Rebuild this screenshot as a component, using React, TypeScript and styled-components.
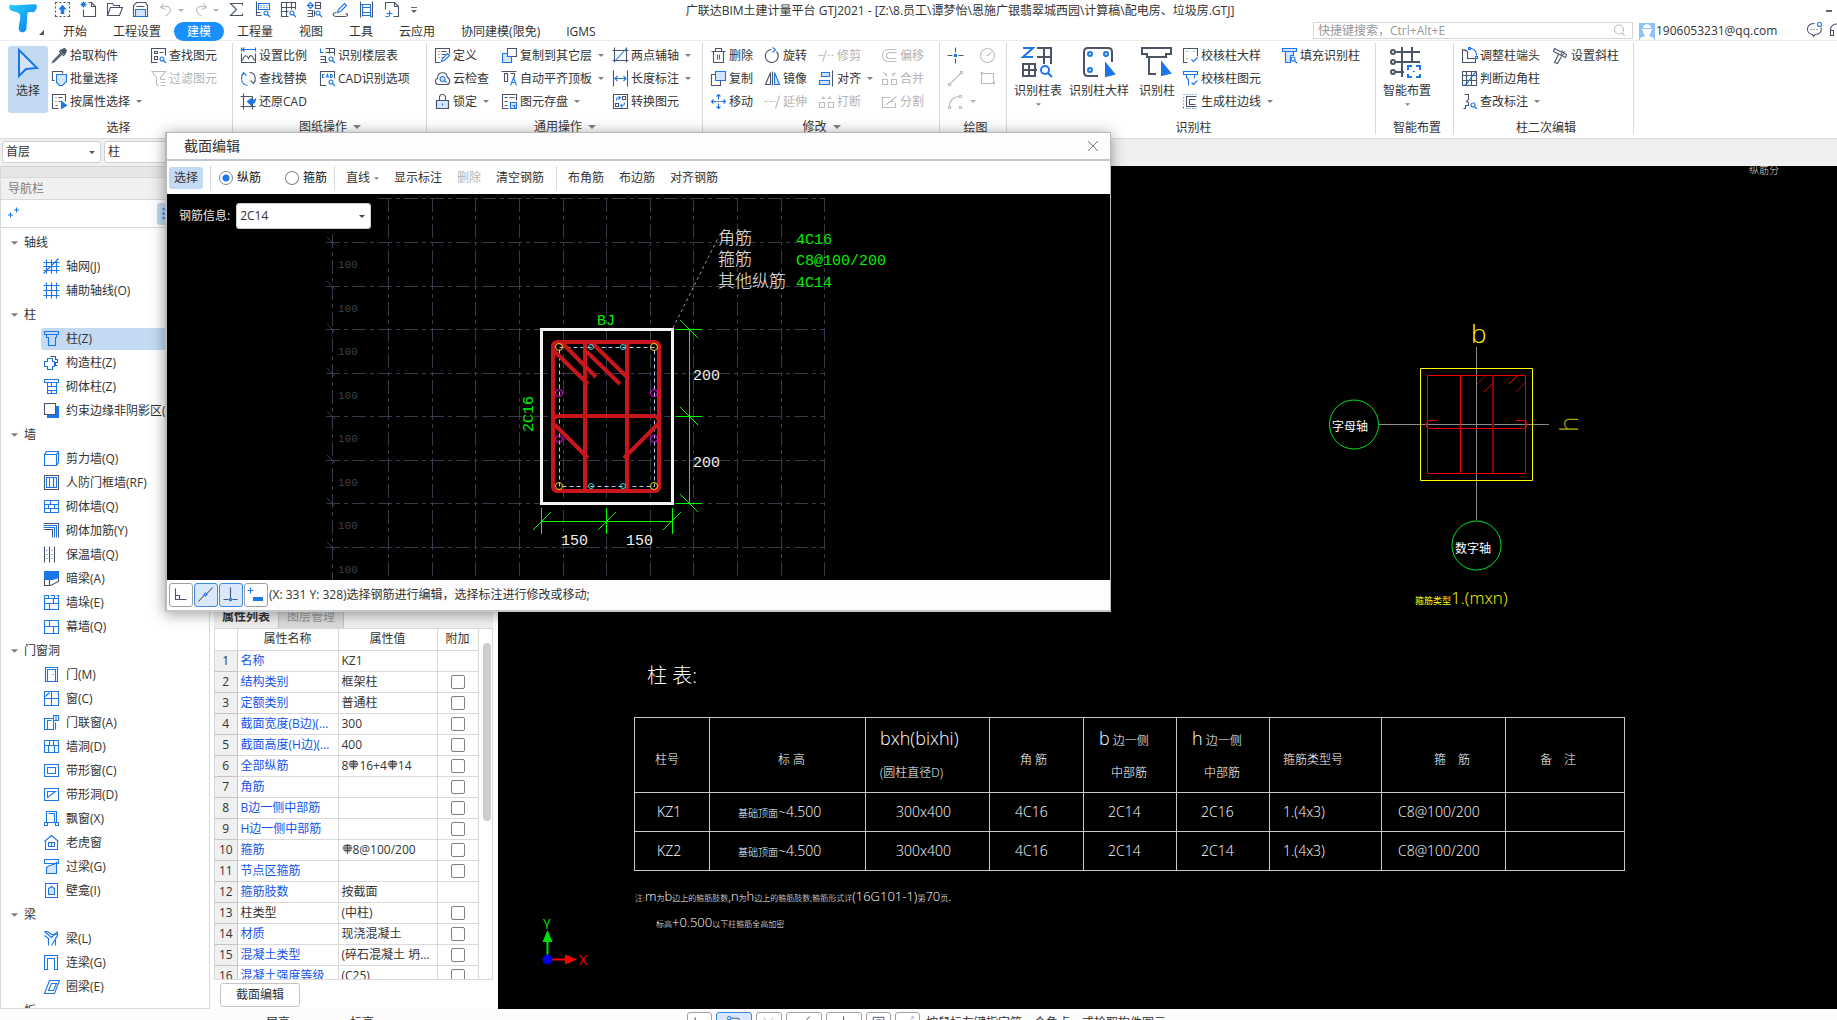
import React from 'react';
import styled, { createGlobalStyle, css } from 'styled-components';

const UI_FONT = '"Open Sans", "Noto Sans CJK SC", sans-serif';
const CAD_FONT = '"Open Sans", "Noto Sans CJK SC", sans-serif';
const MONO_FONT = '"Liberation Mono", "Noto Sans CJK SC", monospace';

const color = {
  text: '#333333',
  muted: '#b4b4b4',
  line: '#d9d9d9',
  dark: '#4b5567',
  blue: '#1b76e8',
  pale: '#d3e4fb',
  active: '#c3daf2',
  panel: '#f0f0f0',
};

const GlobalStyle = createGlobalStyle`
  *, *::before, *::after { box-sizing: border-box; }
  html, body { margin: 0; overflow: hidden; }
  body { font: 12px/18px ${UI_FONT}; color: ${color.text}; background: #fff; }
  button, input, select { font: inherit; color: inherit; }
`;

/* ------------------------------------------------------------------ icons */

type Tone = 'd' | 'b' | 'g' | 'r' | 'D' | 'B' | 'L' | 'G' | 'W';
type Mark = [Tone, string];

const toneStyle: Record<Tone, { stroke: string; fill: string }> = {
  d: { stroke: color.dark, fill: 'none' },
  b: { stroke: color.blue, fill: 'none' },
  g: { stroke: '#bdbdbd', fill: 'none' },
  r: { stroke: '#d8232a', fill: 'none' },
  D: { stroke: color.dark, fill: color.dark },
  B: { stroke: color.blue, fill: color.blue },
  L: { stroke: color.blue, fill: color.pale },
  G: { stroke: '#9a9a9a', fill: '#9a9a9a' },
  W: { stroke: color.dark, fill: '#ffffff' },
};

const LENS = 'M13.5 11.5a2 2 0 1 1-4 0a2 2 0 1 1 4 0M13 13l2.5 2.5';

const icons: Record<string, Mark[]> = {
  upload: [['d', 'M1 3V1h2M5 1h2M9 1h2M13 1h2v2M15 5v2M15 9v2M15 13v2h-2M11 15H9M7 15H5M3 15H1v-2M1 11V9M1 7V5'], ['B', 'M8 4l3 3.500H9.200V12H6.800V7.500H5z']],
  newFile: [['d', 'M8 1h3l4 4v10H3V8M11 1v4h4'], ['b', 'M1 1l4 4M5 1L1 5M3 0v6M0 3h6']],
  open: [['d', 'M1 14V2h5l1.500 2H13v2M1 14l3-8h12l-3 8z']],
  save: [['d', 'M1 15V4l3-3h9l2 3v11zM4 5h8'], ['L', 'M3 15V8h10v7z']],
  undo: [['g', 'M5 2L2 6l5 2M2 6c8-3 12 1 9 5c-1 1.500-3 3-4 3.500']],
  redo: [['g', 'M10 2l3 4l-5 2M13 6C5 3 1 7 4 11c1 1.500 3 3 4 3.500']],
  sum: [['d', 'M14 4V2H2l6 6l-6 6h12v-2']],
  calcView: [['d', 'M2 0v14M2 14h5M2 11h4'], ['b', 'M4 2h11v6H4zM6 4h1M9 4h1M12 4h1M6 6h1M9 6h1M12 6h1'], ['b', LENS]],
  gridFind: [['d', 'M8 15H1V1h14v7M1 6h14M1 10h7M6 1v14M11 1v7'], ['b', LENS]],
  partFind: [['d', 'M9 1h5v6H9zM1 9h5v6H1M8 9v6M1 12h5M9 4h5'], ['b', 'M4 1L1 4l3 3l3-3zM2 4h4'], ['b', LENS]],
  sketch: [['d', 'M4 11c-5 0-4 4 0 4h8c4 0 4-3 1-3'], ['b', 'M5 11l1-3l6-6l2 2l-6 6z']],
  frame: [['d', 'M2 0v16M14 0v16'], ['b', 'M4 3h8M4 6h8M4 11h8M4 14h8M2 3h2v12M12 3v12h2']],
  expand: [['d', 'M1 8V1h9l4 4v10H9M10 1v4h4'], ['b', 'M5 9v6M2 12h6M1 15h3']],
  picker: [['D', 'M9 3l4 4l2-4l-2-2z'], ['d', 'M10 5l-8 8l-1 2l2-1l8-8M7.500 3.500l5 5']],
  batch: [['d', 'M3 10H1V1h10v2'], ['L', 'M5 4h10v7l-4 4H8l-3-3z']],
  byProp: [['d', 'M7 15H1V1h13v7M4 4h1M7 4h4M4 8h1M7 8h2M4 12h2'], ['B', 'M10 8l5 4l-5 3z']],
  find: [['d', 'M7 15H1V1h14v7M4 4h3v2H4zM9 5h4M4 9h3v3H4z'], ['b', LENS]],
  filter: [['g', 'M1 1h14l-5 6v2M6 7v7l2 1.500M1 1l5 6M10 9h5M10 12h5M10 15h5']],
  scale: [['b', 'M1 2h14M1 0v4M15 0v4M4 0L2 2l2 2'], ['d', 'M1 6v9h14V6M2 13c2-6 4-6 6-2c2-5 4-3 6 2']],
  replace: [['d', 'M9 2c6 0 7 7 4 11M10 10l3 3l2-3'], ['b', 'M7 15C0 14 0 6 3 3M1 5l2-3l3 3']],
  restore: [['d', 'M0 3h12M3 0v16M0 13h15M12 3v13'], ['B', 'M7 8l4-3v2c3 0 4-1 4-2c0 4-2 5-4 5v2z']],
  floorTable: [['b', 'M1 1v4h3'], ['d', 'M6 1h9v7M6 5h9M10 1v5M1 9h5v6M1 15h7M1 12h5'], ['b', LENS]],
  cadOpt: [['d', 'M7 15H1V1h14v7'], ['b', 'M5 4H3v3h2M7 7l1-3l1 3M11 4v3h1l1-1.500L12 4z'], ['b', LENS]],
  define: [['d', 'M6 15H1V1h14v5M4 4h1M7 4h5M4 7h1M7 7h4M4 10h1M7 10h1'], ['b', 'M7 14l1-3l5-5l2 2l-5 5z']],
  cloud: [['d', 'M4 14C0 14 0 8 3 8C3 1 12 0 13 7c3 1 3 7-1 7z'], ['L', 'M10.500 8.500a2.500 2.500 0 1 1-5 0a2.500 2.500 0 1 1 5 0M10 10l2 2']],
  lock: [['L', 'M2 7h12v8H2z'], ['d', 'M2 7h12v8H2zM5 7V3c1-3 5-3 6 0v4'], ['B', 'M8 10v2']],
  copyFloor: [['d', 'M6 1h9v8H6z'], ['L', 'M1 6h5v3h4v6H1z']],
  alignTop: [['d', 'M0 1h15M3 3h3v8H3zM9 3h4v4'], ['b', 'M9 15l3-8l3 8M10 12h4']],
  store: [['d', 'M7 15H1V1h14v6M3 4h3M8 4h5M3 8h3M3 12h3'], ['L', 'M9 9h6v6H9zM11 12h2v3']],
  axis: [['d', 'M2 0v15M14 0v15M0 3h16M0 13h16'], ['b', 'M2 14L14 1']],
  dim: [['d', 'M1 0v16M15 0v16'], ['b', 'M2 8h12M5 5.500L2.500 8L5 10.500M11 5.500L13.500 8L11 10.500']],
  convert: [['d', 'M1 1h14v14H1zM10 3h3v3h-3zM3 10h3v3H3z'], ['b', 'M4 7c0-3 1-3 4-3M12 9c0 3-1 3-4 3M6 3l2 1l-2 2M10 14l-2-2l2-1']],
  trash: [['d', 'M1 4h14M3 4v11h10V4M5 4V1h6v3'], ['r', 'M7 7v5M9 7v5']],
  copy: [['L', 'M5 1h10v9H5z'], ['d', 'M5 4H1v11h9v-5']],
  move: [['b', 'M8 1v5M8 10v5M1 8h5M10 8h5M6 3l2-2l2 2M6 13l2 2l2-2M3 6L1 8l2 2M13 6l2 2l-2 2'], ['d', 'M7 8h2']],
  rotate: [['d', 'M7 2a6.500 6.500 0 1 0 5 2'], ['b', 'M8 0l3 2l-3 3']],
  mirror: [['d', 'M6 2v12H1z'], ['L', 'M10 2v12h5z'], ['d', 'M8 1v14']],
  extend: [['g', 'M0 8h3M5 8h3M9 8h2M15 2l-4 13']],
  trim: [['g', 'M0 8h5M8 3L4 14M9 8h2M13 8h2']],
  alignObj: [['L', 'M3 2h8v4H3zM1 10h10v4H1z'], ['d', 'M14 0v16']],
  breakObj: [['g', 'M1 9h5v5H1zM10 9h5v5h-5zM3 5h3L4 3M13 5h-3l2-2']],
  offset: [['g', 'M15 2H7c-8 0-8 12 0 12h8M15 5H8c-4 0-4 6 0 6h7']],
  merge: [['g', 'M1 9h5v5H1zM10 9h5v5h-5zM2 2l3 3V3M14 2l-3 3V3']],
  split: [['g', 'M9 4H1v10h13V9M5 11l10-8M9 8h3']],
  point: [['d', 'M8 0v5M8 11v5M0 8h5M11 8h5'], ['B', 'M7 7h2v2H7z']],
  circle: [['g', 'M15 8a7 7 0 1 1-14 0a7 7 0 1 1 14 0M7 8h2l3-4']],
  line: [['g', 'M3 13L13 3M1 13h2v2H1zM13 1h2v2h-2z']],
  rect: [['g', 'M2 3h12v10H2zM1 2h2v2M13 12h2v2']],
  arc: [['g', 'M2 13C2 7 6 3 12 3M1 13h2v2H1zM12 2h2v2h-2zM12 13h2v2h-2z']],
  checkBig: [['d', 'M5 15H1V1h14v8M4 11h1'], ['b', 'M9 12l2 2l4-4M4 4h1M11 4h1']],
  checkEl: [['b', 'M1 1h14v3H1zM4 4v3l2 2v6M12 4v4M9 12l2 2l4-4']],
  edge: [['d', 'M14 3H4v10h10M13 6H7v5h6'], ['b', 'M1 1h1M4 1h1M7 1h1M10 1h1M13 1h1M1 4v1M1 7v1M1 10v1M1 13v2M4 15h1M7 15h1M10 15h1M13 15h1']],
  fillCol: [['L', 'M1 1h14v3H1zM4 4h8v4H9v7H4z'], ['b', LENS]],
  endAdj: [['d', 'M1 2v13h13v-4H6V4zM3 2l3 2'], ['b', 'M8 1h2c4 1 5 4 5 7M7 0h2v2H7zM14 9h2v2h-2z']],
  cornerCol: [['d', 'M1 1h14v14H1zM1 5h14M1 10h14M5 1v14M10 1v14'], ['b', 'M1 15c6 0 6-7 14-14']],
  checkDim: [['d', 'M3 1h4v5L5 8l2 1v3H4v3H2'], ['b', LENS]],
  slant: [['d', 'M2 1l12 6l-1 3L1 4zM6 7l-4 8l3 1l4-7M10 3L8 8M12 4l-2 4']],
  bigGrid: [['b', 'M1 1h5L1 5.500h5'], ['d', 'M8 1h7v8M8 5.500h7M11.500 1v8M1 9h6v6H1zM4 9v6M1 12h7'], ['b', 'M14 12a2 2 0 1 1-4 0a2 2 0 1 1 4 0M13.500 13.500l2 2']],
  bigSample: [['d', 'M8 15H3q-2 0-2-2V3q0-2 2-2h10q2 0 2 2v5'], ['b', 'M5 4a1 1 0 1 1-2 0a1 1 0 1 1 2 0M13 4a1 1 0 1 1-2 0a1 1 0 1 1 2 0M5 12a1 1 0 1 1-2 0a1 1 0 1 1 2 0'], ['B', 'M12 9l4 5l-4 1z']],
  bigCol: [['d', 'M1 1h14.500v3H13v1.500H3.500V4H1zM4.500 5.500V14H8'], ['B', 'M11 8.500l4 5l-4 1z']],
  bigSmart: [['d', 'M3 3h12M3 8h12M3 13h4M6 .5v15M11 .5V8M2.500 3a1 1 0 1 1-2 0a1 1 0 1 1 2 0M2.500 8a1 1 0 1 1-2 0a1 1 0 1 1 2 0M2.500 13a1 1 0 1 1-2 0a1 1 0 1 1 2 0'], ['b', 'M9 12v-2h2M13 10h2v2M15 14v1.500h-2M11 15.500H9V14M12 12.500v.5']],
  bigArrow: [['L', 'M4 2l9 9l-5.500 .5L4 15z']],
  axisNet: [['b', 'M3 1v14M8 1v14M13 1v14M0 4h16M0 8h16M0 12h16M0 15L15 0']],
  axisAux: [['b', 'M3 0v16M8 0v16M13 0v16M0 3h16M0 8h16M0 13h16']],
  column: [['b', 'M1 1h14v3H1zM3 4v3h2v8h7V7h1V4']],
  tieCol: [['d', 'M7 2h5v3h2v3h-2v3h2'], ['b', 'M4 4h5v3h2v5H9v3H4v-3H1V7h3z']],
  brickCol: [['b', 'M1 1h14v3H1zM4 4v11h9V4M4 8h9M4 12h9M8 4v4M8 12v3']],
  edgeZone: [['B', 'M13 4h2v11H4v-2h9z'], ['W', 'M1 1h11v11H1z']],
  shearWall: [['b', 'M1 4h12v11H1zM1 4l2-3h12v11l-2 3M13 4l2-3']],
  defence: [['d', 'M1 1h14v14H1z'], ['b', 'M3 3h10v10H3zM6 3v10M10 3v10']],
  brickWall: [['b', 'M1 2h14v12H1zM1 6h14M1 10h14M7 2v4M11 6v4M5 6v4M7 10v4']],
  brickBar: [['d', 'M0 1h15v14M0 7h9v8'], ['b', 'M0 5h11v10M0 3h13v12']],
  insulate: [['d', 'M1 0v16M6 0v16M11 0v16'], ['b', 'M3 4h1M3 8h1M3 12h1M8 4h1M8 8h1M8 12h1']],
  hiddenBeam: [['B', 'M1 1h14v6l-6 2H1z'], ['d', 'M1 9v6h6l8-4V7M6 9v6']],
  pier: [['b', 'M1 4h14v11H1zM1 1h4v3M7 1h4v3M13 1h2v3M1 1v3M1 9h14M6 9v6M10 4v5']],
  curtain: [['b', 'M1 2h14v13H1zM1 8h14M6 2v6M10 8v7']],
  door: [['b', 'M2 1h12v14H2zM4 15V3h8v12M9 8h1']],
  window: [['b', 'M1 1h14v14H1zM1 8h14M8 1v14M2 6l4-4']],
  doorWin: [['b', 'M1 4h9v11H1zM4 15V6h4M10 1h5v5h-5zM12.500 1v5M12 8v7']],
  wallHole: [['b', 'M1 2h14v12H1zM5 14V7h6v7M1 7h14M6 2v5M10 2v5']],
  stripWin: [['b', 'M1 2h14v12H1zM4 5h8v6H4z']],
  stripHole: [['b', 'M1 2h14v12H1zM4 11V5h8z']],
  bayWin: [['b', 'M3 1h10v11H3zM5 3h6v9M1 15v-3h3v3zM12 15v-3h3v3z']],
  dormer: [['b', 'M1 7l7-6l7 6M2 7v8h12V7M5 8h6v4H5zM8 8v4']],
  lintel: [['L', 'M3 15V9c4-4 6-1 10-5v11z'], ['b', 'M1 1h14v4H1z']],
  niche: [['b', 'M2 1h12v14H2z'], ['L', 'M5 12V6l3-2l3 2v6z']],
  beam: [['b', 'M1 1l7 6l6-6M1 1h3l4 3h6M1 5l4 3v7M14 2v3L8 15M12 7v8']],
  linkBeam: [['b', 'M1 15V1h13v14h-3V4H4v11z']],
  ringBeam: [['b', 'M1 15l5-13h10l-5 13zM5 12l3-7h5l-3 7z']],
  ortho: [['d', 'M3 2v11h11M3 9h4v4']],
  slash: [['b', 'M8 6.500l1.500 1.500l-1.500 1.500L6.500 8z'], ['d', 'M1 15l5.500-6M9.500 7L15 1']],
  perp: [['d', 'M8 1v12M1 13h5M10 13h5'], ['b', 'M8 11.500l1.500 1.500l-1.500 1.500L6.500 13z']],
  plusBar: [['b', 'M3 1v6M0 4h6'], ['B', 'M6 11h9v3H6z']],
  sparkle: [['b', 'M11 2v5M8.500 4.500h5M5 7v5M2.500 9.500h5']],
  dots: [['b', 'M7 1h2v2H7zM7 7h2v2H7zM7 13h2v2H7z']],
  search: [['g', 'M12 7a4.500 4.500 0 1 1-9 0a4.500 4.500 0 1 1 9 0M10.500 10.500L13 13']],
  chat: [['d', 'M8 2c-9 0-9 10-2 11l1 2l1.500-2c5 0 7-3 6-7M4 8h1M7 8h1M10 8h1'], ['b', 'M15 3a2 2 0 1 1-4 0a2 2 0 1 1 4 0']],
  headset: [['d', 'M2 10C1 0 15 0 14 10M2 9h3v5H2zM11 9h3v5h-3z']],
  cross: [['g', 'M2 2l12 12M14 2L2 14']],
  lasso: [['b', 'M3 1a2 2 0 1 1 0 4a2 2 0 1 1 0-4'], ['d', 'M5 3h7q3 0 3 3']],
  layers: [['d', 'M2 2h12v12H2zM5 5h6v6H5z']],
};

const Svg = styled.svg<{ $size: number }>`
  flex: none;
  display: block;
  overflow: visible;
  width: ${(p) => p.$size}px;
  height: ${(p) => p.$size}px;
`;

function Icon({ name, size = 16, weight = 1.1 }: { name: string; size?: number; weight?: number }) {
  return (
    <Svg $size={size} viewBox="0.5 0.5 16 16" aria-hidden="true">
      {icons[name].map(([tone, d], i) => (
        <path key={i} d={d} strokeWidth={weight} {...toneStyle[tone]} />
      ))}
    </Svg>
  );
}

const CaretSvg = styled.svg<{ $w: number }>`
  flex: none;
  width: ${(p) => p.$w}px;
  height: ${(p) => Math.ceil(p.$w / 2)}px;
`;
function Caret({ w = 6, fill = '#808080' }: { w?: number; fill?: string }) {
  return (
    <CaretSvg $w={w} viewBox="0 0 8 4" aria-hidden="true">
      <path d="M0 0h8L4 4z" fill={fill} />
    </CaretSvg>
  );
}

/* ----------------------------------------------------------------- header */

const Shell = styled.div`
  display: flex;
  flex-direction: column;
  height: 100vh;
  overflow: hidden;
  position: relative;
  white-space: nowrap;
`;

const Header = styled.header`
  flex: none;
  display: grid;
  grid-template-columns: 50px minmax(0, 1fr);
  grid-template-rows: 22px 18px;
  border-bottom: 1px solid #ececec;
`;
const LogoCell = styled.div`
  grid-row: span 2;
  padding: 0 0 5px 8px;
  display: flex;
  align-items: flex-end;
`;
const TitleRow = styled.div`
  display: flex;
  align-items: center;
`;
const Quick = styled.div`
  display: flex;
  align-items: center;
  gap: 10px;
  padding: 0 6px 2px 5px;
`;
const bare = css`
  border: 0;
  background: none;
  padding: 0;
  margin: 0;
  display: flex;
  align-items: center;
`;
const QuickButton = styled.button`
  ${bare}
  gap: 3px;
`;
const WindowTitle = styled.h1`
  flex: 1;
  margin: 0;
  font-size: 12px;
  font-weight: 400;
  text-align: center;
`;
const WindowButtons = styled.div`
  width: 340px;
  display: flex;
  justify-content: flex-end;
  padding-right: 5px;
`;
const Minimise = styled.button`
  ${bare}
  width: 6px;
  height: 2px;
  background: #666;
`;
const TabRow = styled.div`
  display: flex;
  align-items: flex-start;
`;
const Tabs = styled.nav`
  display: flex;
  flex: 1;
`;
const Tab = styled.button<{ $on?: boolean }>`
  ${bare}
  height: 19px;
  padding: 0 13px;
  border-radius: 10px;
  ${(p) => p.$on && 'background: #1890ff; color: #fff;'}
`;
const SearchBox = styled.label`
  display: flex;
  align-items: center;
  width: 320px;
  height: 17px;
  padding: 0 4px;
  border: 1px solid #d5d5d5;
`;
const SearchInput = styled.input`
  flex: 1;
  min-width: 0;
  height: 15px;
  padding: 0;
  border: 0;
  outline: 0;
  &::placeholder { color: #999; opacity: 1; }
`;
const Account = styled.button`
  ${bare}
  width: 168px;
  margin-left: 6px;
  gap: 1px;
`;
const HelpButtons = styled.div`
  width: 30px;
  display: flex;
  gap: 6px;
  overflow: hidden;
`;

const tabs = ['开始', '工程设置', '建模', '工程量', '视图', '工具', '云应用', '协同建模(限免)', 'IGMS'];

function AppHeader() {
  return (
    <Header>
      <LogoCell>
        <svg width="31" height="32" viewBox="0 0 32 32" aria-hidden="true">
          <defs>
            <linearGradient id="logo" x1="0" y1="0" x2="1" y2="1">
              <stop offset="0" stopColor="#28d0f8" />
              <stop offset="1" stopColor="#0878ee" />
            </linearGradient>
          </defs>
          <path d="M2 1C7 3 23 0 29 1c2 1 0 7-3 8c-3 0-6-1-6 2l-1 15c-1 5-7 5-8 0c0-5 3-12 1-15C10 7 3 10 1 4z" fill="url(#logo)" />
        </svg>
        <svg width="5" height="5" viewBox="0 0 5 5" aria-hidden="true">
          <path d="M5 0v5H0z" fill="#555" />
        </svg>
      </LogoCell>
      <TitleRow>
        <Quick>
          {['upload', 'newFile', 'open', 'save'].map((n) => (
            <QuickButton key={n} aria-label={n}><Icon name={n} /></QuickButton>
          ))}
          {['undo', 'redo'].map((n) => (
            <QuickButton key={n} aria-label={n}><Icon name={n} /><Caret fill="#b0b0b0" /></QuickButton>
          ))}
          {['sum', 'calcView', 'gridFind', 'partFind', 'sketch', 'frame', 'expand'].map((n) => (
            <QuickButton key={n} aria-label={n}><Icon name={n} /></QuickButton>
          ))}
          <QuickButton aria-label="more">
            <svg width="6" height="7" viewBox="0 0 6 7"><path d="M0 0h6v1H0zM0 3h6L3 6z" fill="#666" /></svg>
          </QuickButton>
        </Quick>
        <WindowTitle>广联达BIM土建计量平台 GTJ2021 - [Z:\8.员工\谭梦怡\恩施广银翡翠城西园\计算稿\配电房、垃圾房.GTJ]</WindowTitle>
        <WindowButtons><Minimise aria-label="minimise" /></WindowButtons>
      </TitleRow>
      <TabRow>
        <Tabs>
          {tabs.map((t) => <Tab key={t} $on={t === '建模'}>{t}</Tab>)}
        </Tabs>
        <SearchBox>
          <SearchInput aria-label="快捷键搜索" placeholder="快捷键搜索，Ctrl+Alt+E" />
          <Icon name="search" />
        </SearchBox>
        <Account>
          <svg width="16" height="17" viewBox="0 0 16 17" aria-hidden="true">
            <path d="M0 0h16v17H0z" fill="#8fc3fb" />
            <path d="M3 6h10v1l-1 1c0 3-2 4-2 5l5 2v2H1v-2l5-2c0-1-2-2-2-5L3 7zM4 5c0-5 8-5 8 0z" fill="#fff" />
          </svg>
          1906053231@qq.com
        </Account>
        <HelpButtons><Icon name="chat" /><Icon name="headset" /></HelpButtons>
      </TabRow>
    </Header>
  );
}

/* ----------------------------------------------------------------- ribbon */

const Ribbon = styled.section`
  flex: none;
  display: flex;
  height: 98px;
  overflow: hidden;
  border-bottom: 1px solid ${color.line};
`;
const Group = styled.div<{ $w: number }>`
  flex: none;
  width: ${(p) => p.$w}px;
  padding-top: 3px;
  position: relative;
  &::after {
    content: '';
    position: absolute;
    right: 0;
    top: 2px;
    bottom: 4px;
    width: 1px;
    background: ${color.line};
  }
`;
const GroupBody = styled.div<{ $pad?: number }>`
  display: flex;
  height: 70px;
  padding-left: ${(p) => p.$pad ?? 8}px;
`;
const GroupLabel = styled.div<{ $menu?: boolean }>`
  height: ${(p) => (p.$menu ? 25 : 27)}px;
  padding-left: ${(p) => (p.$menu ? 0 : 4)}px;
  display: flex;
  align-items: center;
  justify-content: center;
  gap: 6px;
`;
const Commands = styled.div<{ $cols: string }>`
  display: grid;
  grid-auto-flow: column;
  grid-template-rows: repeat(3, 23px);
  grid-template-columns: ${(p) => p.$cols};
`;
const CommandButton = styled.button<{ $off?: boolean }>`
  ${bare}
  gap: 2px;
  ${(p) => p.$off && `color: ${color.muted};`}
  svg + svg, span + svg { margin-left: 4px; }
`;
const BigButton = styled.button<{ $w: number; $on?: boolean }>`
  ${bare}
  flex-direction: column;
  width: ${(p) => p.$w}px;
  height: 67px;
  margin-top: 2px;
  padding-top: 1px;
  gap: 3px;
  border-radius: 3px;
  ${(p) => p.$on && `background: ${color.active};`}
`;

type Cmd = { i: string; t?: string; off?: boolean; drop?: boolean } | null;

function CommandGrid({ cols, items }: { cols: string; items: Cmd[] }) {
  return (
    <Commands $cols={cols}>
      {items.map((c, k) =>
        c ? (
          <CommandButton key={k} $off={c.off} aria-label={c.t ?? c.i}>
            <Icon name={c.i} />
            {c.t && <span>{c.t}</span>}
            {c.drop && <Caret fill={c.off ? '#b0b0b0' : '#808080'} />}
          </CommandButton>
        ) : (
          <span key={k} />
        ),
      )}
    </Commands>
  );
}

function Big({ w, icon, label, on, drop }: { w: number; icon: string; label: string; on?: boolean; drop?: boolean }) {
  return (
    <BigButton $w={w} $on={on}>
      <Icon name={icon} size={32} weight={1} />
      <span>{label}</span>
      {drop && <Caret w={5} />}
    </BigButton>
  );
}

function RibbonBar() {
  return (
    <Ribbon>
      <Group $w={233}>
        <GroupBody>
          <Big w={40} icon="bigArrow" label="选择" on />
          <GroupBody $pad={4}>
            <CommandGrid cols="99px auto" items={[
              { i: 'picker', t: '拾取构件' }, { i: 'batch', t: '批量选择' }, { i: 'byProp', t: '按属性选择', drop: true },
              { i: 'find', t: '查找图元' }, { i: 'filter', t: '过滤图元', off: true }, null,
            ]} />
          </GroupBody>
        </GroupBody>
        <GroupLabel>选择</GroupLabel>
      </Group>
      <Group $w={194}>
        <GroupBody>
          <CommandGrid cols="79px auto" items={[
            { i: 'scale', t: '设置比例' }, { i: 'replace', t: '查找替换' }, { i: 'restore', t: '还原CAD' },
            { i: 'floorTable', t: '识别楼层表' }, { i: 'cadOpt', t: 'CAD识别选项' }, null,
          ]} />
        </GroupBody>
        <GroupLabel $menu>图纸操作 <Caret w={8} /></GroupLabel>
      </Group>
      <Group $w={276}>
        <GroupBody>
          <CommandGrid cols="67px 111px auto" items={[
            { i: 'define', t: '定义' }, { i: 'cloud', t: '云检查' }, { i: 'lock', t: '锁定', drop: true },
            { i: 'copyFloor', t: '复制到其它层', drop: true }, { i: 'alignTop', t: '自动平齐顶板', drop: true }, { i: 'store', t: '图元存盘', drop: true },
            { i: 'axis', t: '两点辅轴', drop: true }, { i: 'dim', t: '长度标注', drop: true }, { i: 'convert', t: '转换图元' },
          ]} />
        </GroupBody>
        <GroupLabel $menu>通用操作 <Caret w={8} /></GroupLabel>
      </Group>
      <Group $w={237}>
        <GroupBody>
          <CommandGrid cols="54px 54px 63px auto" items={[
            { i: 'trash', t: '删除' }, { i: 'copy', t: '复制' }, { i: 'move', t: '移动' },
            { i: 'rotate', t: '旋转' }, { i: 'mirror', t: '镜像' }, { i: 'extend', t: '延伸', off: true },
            { i: 'trim', t: '修剪', off: true }, { i: 'alignObj', t: '对齐', drop: true }, { i: 'breakObj', t: '打断', off: true },
            { i: 'offset', t: '偏移', off: true }, { i: 'merge', t: '合并', off: true }, { i: 'split', t: '分割', off: true },
          ]} />
        </GroupBody>
        <GroupLabel $menu>修改 <Caret w={8} /></GroupLabel>
      </Group>
      <Group $w={67}>
        <GroupBody>
          <CommandGrid cols="32px auto" items={[
            { i: 'point' }, { i: 'line', off: true }, { i: 'arc', off: true, drop: true },
            { i: 'circle', off: true }, { i: 'rect', off: true }, null,
          ]} />
        </GroupBody>
        <GroupLabel>绘图</GroupLabel>
      </Group>
      <Group $w={369}>
        <GroupBody $pad={3}>
          <Big w={56} icon="bigGrid" label="识别柱表" drop />
          <Big w={66} icon="bigSample" label="识别柱大样" />
          <Big w={50} icon="bigCol" label="识别柱" />
          <GroupBody $pad={1}>
            <CommandGrid cols="99px auto" items={[
              { i: 'checkBig', t: '校核柱大样' }, { i: 'checkEl', t: '校核柱图元' }, { i: 'edge', t: '生成柱边线', drop: true },
              { i: 'fillCol', t: '填充识别柱' }, null, null,
            ]} />
          </GroupBody>
        </GroupBody>
        <GroupLabel>识别柱</GroupLabel>
      </Group>
      <Group $w={78}>
        <GroupBody $pad={3}>
          <Big w={56} icon="bigSmart" label="智能布置" drop />
        </GroupBody>
        <GroupLabel>智能布置</GroupLabel>
      </Group>
      <Group $w={180}>
        <GroupBody>
          <CommandGrid cols="91px auto" items={[
            { i: 'endAdj', t: '调整柱端头' }, { i: 'cornerCol', t: '判断边角柱' }, { i: 'checkDim', t: '查改标注', drop: true },
            { i: 'slant', t: '设置斜柱' }, null, null,
          ]} />
        </GroupBody>
        <GroupLabel>柱二次编辑</GroupLabel>
      </Group>
    </Ribbon>
  );
}

/* ------------------------------------------------------------- floor bar */

const FloorBar = styled.div`
  flex: none;
  display: flex;
  align-items: center;
  gap: 3px;
  height: 27px;
  padding: 0 2px 1px;
  background: ${color.panel};
`;
const SelectWrap = styled.div<{ $w: number; $h: number }>`
  display: flex;
  align-items: center;
  width: ${(p) => p.$w}px;
  height: ${(p) => p.$h}px;
  padding-right: 5px;
  border: 1px solid #cfcfcf;
  border-radius: 3px;
  background: #fff;
`;
const Select = styled.select`
  flex: 1;
  min-width: 0;
  height: 100%;
  padding: 0 3px;
  appearance: none;
  border: 0;
  background: none;
  outline: 0;
`;

/* ------------------------------------------------------------- navigation */

const Body = styled.div`
  flex: 1;
  min-height: 0;
  display: grid;
  grid-template-columns: 210px 288px minmax(0, 1fr);
`;
const Sidebar = styled.aside`
  min-height: 0;
  display: flex;
  flex-direction: column;
  border: 1px solid ${color.line};
  border-top: 0;
`;
const DockStrip = styled.div`
  flex: none;
  height: 11px;
  background: #e6e6e6;
  border-top: 1px solid #d0d0d0;
`;
const PanelTitle = styled.h2`
  flex: none;
  height: 23px;
  margin: 0;
  padding: 0 7px;
  font-size: 12px;
  line-height: 22px;
  font-weight: 400;
  color: #7d7d7d;
  background: ${color.panel};
  border-top: 1px solid ${color.line};
  border-bottom: 1px solid ${color.line};
`;
const NavTools = styled.div`
  flex: none;
  height: 28px;
  display: flex;
  align-items: center;
  justify-content: space-between;
  padding: 0 38px 0 4px;
  border-bottom: 1px solid ${color.line};
`;
const ToolButton = styled.button<{ $on?: boolean }>`
  ${bare}
  height: 22px;
  padding: 0 1px;
  border-radius: 3px;
  ${(p) => p.$on && `background: ${color.active};`}
`;
const Tree = styled.ul`
  flex: 1;
  min-height: 0;
  margin: 0;
  padding: 3px 0 0;
  list-style: none;
  overflow: hidden;
`;
const Branch = styled.ul`
  margin: 0;
  padding: 0;
  list-style: none;
`;
const BranchHead = styled.button`
  ${bare}
  height: 24px;
  gap: 6px;
  padding-left: 10px;
`;
const LeafItem = styled.li`
  display: flex;
  align-items: center;
  height: 24px;
  padding-left: 40px;
`;
const Leaf = styled.button<{ $on?: boolean }>`
  ${bare}
  flex: 1;
  height: 22px;
  padding-left: 3px;
  gap: 6px;
  border-radius: 3px;
  overflow: hidden;
  ${(p) => p.$on && `background: ${color.active};`}
`;

const tree: { name: string; items: [string, string][] }[] = [
  { name: '轴线', items: [['axisNet', '轴网(J)'], ['axisAux', '辅助轴线(O)']] },
  { name: '柱', items: [['column', '柱(Z)'], ['tieCol', '构造柱(Z)'], ['brickCol', '砌体柱(Z)'], ['edgeZone', '约束边缘非阴影区(Z)']] },
  { name: '墙', items: [['shearWall', '剪力墙(Q)'], ['defence', '人防门框墙(RF)'], ['brickWall', '砌体墙(Q)'], ['brickBar', '砌体加筋(Y)'], ['insulate', '保温墙(Q)'], ['hiddenBeam', '暗梁(A)'], ['pier', '墙垛(E)'], ['curtain', '幕墙(Q)']] },
  { name: '门窗洞', items: [['door', '门(M)'], ['window', '窗(C)'], ['doorWin', '门联窗(A)'], ['wallHole', '墙洞(D)'], ['stripWin', '带形窗(C)'], ['stripHole', '带形洞(D)'], ['bayWin', '飘窗(X)'], ['dormer', '老虎窗'], ['lintel', '过梁(G)'], ['niche', '壁龛(I)']] },
  { name: '梁', items: [['beam', '梁(L)'], ['linkBeam', '连梁(G)'], ['ringBeam', '圈梁(E)']] },
  { name: '板', items: [] },
];

function Navigation() {
  return (
    <Sidebar>
      <DockStrip />
      <PanelTitle>导航栏</PanelTitle>
      <NavTools>
        <ToolButton aria-label="add"><Icon name="sparkle" /></ToolButton>
        <ToolButton $on aria-label="list"><Icon name="dots" size={12} /></ToolButton>
      </NavTools>
      <Tree>
        {tree.map((b) => (
          <li key={b.name}>
            <BranchHead><Caret w={7} /><span>{b.name}</span></BranchHead>
            <Branch>
              {b.items.map(([icon, name]) => (
                <LeafItem key={name}>
                  <Leaf $on={name === '柱(Z)'}><Icon name={icon} /><span>{name}</span></Leaf>
                </LeafItem>
              ))}
            </Branch>
          </li>
        ))}
      </Tree>
    </Sidebar>
  );
}

/* ------------------------------------------------------------- properties */

const PropertyDock = styled.section`
  min-height: 0;
  display: flex;
  flex-direction: column;
  padding: 0 5px 2px 4px;
`;
const ComponentList = styled.div`
  flex: 1;
  background: #fff;
`;
const PropTabs = styled.div`
  flex: none;
  display: flex;
  height: 24px;
  background: ${color.panel};
  border-bottom: 1px solid ${color.line};
`;
const PropTab = styled.button<{ $on?: boolean }>`
  ${bare}
  width: 65px;
  padding-left: 8px;
  border-right: 1px solid #c4c4c4;
  font-weight: ${(p) => (p.$on ? 600 : 400)};
  color: ${(p) => (p.$on ? color.text : '#999')};
  background: ${(p) => (p.$on ? color.panel : '#dcdcdc')};
`;
const TableFrame = styled.div`
  flex: none;
  display: flex;
  height: 351px;
  overflow: hidden;
  border: 1px solid ${color.line};
  border-top: 0;
`;
const PropTable = styled.table`
  width: 263px;
  table-layout: fixed;
  border-collapse: collapse;
  th, td {
    height: 21px;
    padding: 0 0 0 3px;
    line-height: 20px;
    border-right: 1px solid ${color.line};
    border-bottom: 1px solid ${color.line};
    font-weight: 400;
    text-align: left;
    overflow: hidden;
    text-overflow: ellipsis;
  }
  thead th { text-align: center; padding: 0; }
  tbody th { text-align: center; padding: 0; background: ${color.panel}; border-color: #c4c4c4; }
`;
const NameCell = styled.td<{ $plain?: boolean }>`
  color: ${(p) => (p.$plain ? color.text : '#1455ee')};
`;
const CheckCell = styled.td`
  && { padding: 0; }
`;
const Check = styled.input`
  appearance: none;
  display: block;
  width: 14px;
  height: 14px;
  margin: 0 auto;
  border: 1px solid #808080;
  border-radius: 2px;
  background: #fff;
`;
const ScrollTrack = styled.div`
  flex: 1;
  padding: 14px 0 0 4px;
`;
const ScrollThumb = styled.div`
  width: 8px;
  height: 178px;
  border-radius: 4px;
  background: #cdcdcd;
`;
const EditButton = styled.button`
  flex: none;
  width: 80px;
  height: 24px;
  margin: 3px 0 0 6px;
  padding: 0;
  border: 1px solid #c4c4c4;
  border-radius: 3px;
  background: #fff;
`;

const RebarMark = styled.svg`
  width: 11px;
  height: 10px;
  vertical-align: 0;
`;
function Rebar() {
  return (
    <RebarMark viewBox="0 0 11 10" aria-label="HRB400">
      <path d="M2 1.500h7v5H2zM.5 4h10M4 .5v8M7 .5v8M5.500 0v10" fill="none" stroke="#333" strokeWidth=".8" />
    </RebarMark>
  );
}

const props: [string, React.ReactNode, boolean, boolean?][] = [
  ['名称', 'KZ1', false],
  ['结构类别', '框架柱', true],
  ['定额类别', '普通柱', true],
  ['截面宽度(B边)(mm)', '300', true],
  ['截面高度(H边)(mm)', '400', true],
  ['全部纵筋', <>8<Rebar />16+4<Rebar />14</>, true],
  ['角筋', '', true],
  ['B边一侧中部筋', '', true],
  ['H边一侧中部筋', '', true],
  ['箍筋', <><Rebar />8@100/200</>, true],
  ['节点区箍筋', '', true],
  ['箍筋肢数', '按截面', false],
  ['柱类型', '(中柱)', true, true],
  ['材质', '现浇混凝土', true],
  ['混凝土类型', '(碎石混凝土 坍落度)', true],
  ['混凝土强度等级', '(C25)', true],
];

function Properties() {
  return (
    <PropertyDock>
      <ComponentList />
      <PropTabs>
        <PropTab $on>属性列表</PropTab>
        <PropTab>图层管理</PropTab>
      </PropTabs>
      <TableFrame>
        <PropTable>
          <colgroup>
            <col style={{ width: 22 }} /><col style={{ width: 101 }} /><col style={{ width: 99 }} /><col style={{ width: 41 }} />
          </colgroup>
          <thead>
            <tr><th /><th>属性名称</th><th>属性值</th><th>附加</th></tr>
          </thead>
          <tbody>
            {props.map(([name, value, check, plain], i) => (
              <tr key={name}>
                <th scope="row">{i + 1}</th>
                <NameCell $plain={plain}>{name}</NameCell>
                <td>{value}</td>
                <CheckCell>{check && <Check type="checkbox" aria-label={`${name} 附加`} />}</CheckCell>
              </tr>
            ))}
          </tbody>
        </PropTable>
        <ScrollTrack><ScrollThumb /></ScrollTrack>
      </TableFrame>
      <EditButton>截面编辑</EditButton>
    </PropertyDock>
  );
}

/* ------------------------------------------------------------ main canvas */

const Canvas = styled.main`
  position: relative;
  overflow: hidden;
  background: #000;
  color: #fff;
  font-family: ${CAD_FONT};
  font-weight: 300;
`;
const Drawing = styled.svg`
  position: absolute;
  inset: 0;
  display: block;
  width: 100%;
  height: 100%;
  font-family: ${CAD_FONT};
`;
const Schedule = styled.table`
  position: absolute;
  left: 136px;
  top: 551px;
  width: 990px;
  table-layout: fixed;
  border-collapse: collapse;
`;
const HeadCell = styled.th<{ $pad: number; $single?: boolean }>`
  height: 75px;
  padding: ${(p) => (p.$single ? 10 : 0)}px 0 0 ${(p) => p.$pad}px;
  border: 1px solid #c8c8c8;
  font-size: 12px;
  line-height: 32px;
  font-weight: 300;
  text-align: left;
  em { font-style: normal; font-size: 18px; }
`;
const ValueCell = styled.td<{ $pad: number }>`
  height: 39px;
  padding: 0 0 0 ${(p) => p.$pad}px;
  border: 1px solid #c8c8c8;
  font-size: 14px;
  line-height: 20px;
  small { font-size: 10px; }
`;

const columns: { w: number; headPad: number; pad: number; head: React.ReactNode; single?: boolean }[] = [
  { w: 75, headPad: 20, pad: 22, head: '柱号', single: true },
  { w: 156, headPad: 68, pad: 28, head: '标 高', single: true },
  { w: 124, headPad: 14, pad: 30, head: <><em>bxh(bixhi)</em><br />(圆柱直径D)</> },
  { w: 94, headPad: 30, pad: 25, head: '角 筋', single: true },
  { w: 93, headPad: 15, pad: 24, head: <><em>b</em> 边一侧<br />　中部筋</> },
  { w: 93, headPad: 15, pad: 24, head: <><em>h</em> 边一侧<br />　中部筋</> },
  { w: 112, headPad: 13, pad: 13, head: '箍筋类型号', single: true },
  { w: 124, headPad: 52, pad: 16, head: '箍　筋', single: true },
  { w: 119, headPad: 34, pad: 16, head: '备　注', single: true },
];
const rows = [
  ['KZ1', '4.500', '300x400', '4C16', '2C14', '2C16', '1.(4x3)', 'C8@100/200', ''],
  ['KZ2', '4.500', '300x400', '4C16', '2C14', '2C14', '1.(4x3)', 'C8@100/200', ''],
];

function ModelCanvas() {
  return (
    <Canvas>
      <Drawing fill="none">
        <text x="1251" y="8" fontSize="10" fill="#ddd">纵筋分</text>
        <g transform="translate(-498 -166)">
          <path d="M1476.500 347V520M1379 424.500H1549" stroke="#8c8c8c" />
          <path d="M1420.500 368.500h112v112h-112z" stroke="#ff0" />
          <path d="M1427.500 375.500h98v98h-98zM1460.500 375v98" stroke="#f00000" />
          <path d="M1493 375v98" stroke="#8a0000" strokeWidth="2" />
          <path d="M1437 420.500h-7q-4 0-4 4t4 4h93q4 0 4-4t-4-4h-7M1509 384l9-9M1484 392l9-9" stroke="#f00000" />
          <path d="M1477 384l9-9M1516 392l9-9" stroke="#a00000" />
          <circle cx="1354" cy="424.500" r="24.500" stroke="#00e020" />
          <circle cx="1476.500" cy="545.500" r="24.500" stroke="#00e020" />
          <g fill="#fff" fontSize="12" fontWeight="400" textAnchor="middle">
            <text x="1350" y="431">字母轴</text>
            <text x="1473" y="553">数字轴</text>
          </g>
          <g fill="#ff0" fontSize="26">
            <text x="1471" y="343">b</text>
            <text transform="translate(1578 432) rotate(-90)" fill="#a8a800">h</text>
          </g>
          <text x="1415" y="604" fill="#ff0" fontSize="17"><tspan fontSize="9" fontWeight="400">箍筋类型</tspan>1.(mxn)</text>
          <text x="647" y="683" fill="#fff" fontSize="20">柱 表:</text>
          <g fill="#fff" fontSize="13">
            <text x="635" y="901"><tspan fontSize="8">注:</tspan>m<tspan fontSize="8">为</tspan>b<tspan fontSize="8">边上的箍筋肢数</tspan>,n<tspan fontSize="8">为</tspan>h<tspan fontSize="8">边上的箍筋肢数;箍筋形式详</tspan>(16G101-1)<tspan fontSize="8">第</tspan>70<tspan fontSize="8">页</tspan>.</text>
            <text x="656" y="927"><tspan fontSize="8">标高</tspan>+0.500<tspan fontSize="8">以下柱箍筋全高加密</tspan></text>
          </g>
          <path d="M547.500 956V940" stroke="#00e000" strokeWidth="2" />
          <path d="M547.500 930l5 12h-10z" fill="#00e000" />
          <path d="M552 959.500h15" stroke="#f00" strokeWidth="2" />
          <path d="M577 959.500l-12-5v10z" fill="#f00" />
          <circle cx="547.500" cy="959.500" r="5" fill="#0000e0" />
          <g fontSize="14" fontWeight="400">
            <text x="543" y="929" fill="#00e000">Y</text>
            <text x="579" y="965" fill="#f00">X</text>
          </g>
        </g>
      </Drawing>
      <Schedule>
        <colgroup>{columns.map((c, i) => <col key={i} style={{ width: c.w }} />)}</colgroup>
        <thead>
          <tr>
            {columns.map((c, i) => <HeadCell key={i} $pad={c.headPad} $single={c.single}>{c.head}</HeadCell>)}
          </tr>
        </thead>
        <tbody>
          {rows.map((r) => (
            <tr key={r[0]}>
              {r.map((c, i) => (
                <ValueCell key={i} $pad={columns[i].pad}>{i === 1 ? <><small>基础顶面</small>~{c}</> : c}</ValueCell>
              ))}
            </tr>
          ))}
        </tbody>
      </Schedule>
    </Canvas>
  );
}

/* ---------------------------------------------------------- section editor */

const Dialog = styled.section`
  position: absolute;
  left: 165px;
  top: 132px;
  width: 946px;
  height: 480px;
  display: flex;
  flex-direction: column;
  border: 1px solid #b8b8b8;
  border-left-width: 2px;
  border-bottom: 2px solid #c3c7ce;
  background: #fdfdfd;
  box-shadow: 0 2px 14px rgba(0, 0, 0, 0.4);
`;
const DialogTitle = styled.header`
  flex: none;
  display: flex;
  align-items: center;
  justify-content: space-between;
  height: 28px;
  padding: 0 11px 0 17px;
  border-bottom: 2px solid #c3c7ce;
`;
const DialogHeading = styled.h2`
  margin: 0;
  font-size: 14px;
  line-height: 20px;
  font-weight: 400;
`;
const CloseButton = styled.button`
  ${bare}
`;
const DialogTools = styled.div`
  flex: none;
  display: flex;
  align-items: center;
  height: 33px;
  padding: 1px 0 0 2px;
  background: #fff;
`;
const DialogButton = styled.button<{ $on?: boolean; $off?: boolean; $last?: boolean }>`
  ${bare}
  height: 22px;
  padding: 0 ${(p) => (p.$on ? 5 : 3)}px;
  margin-right: ${(p) => (p.$on ? 0 : p.$last ? 2 : 9)}px;
  gap: 4px;
  border-radius: 3px;
  ${(p) => p.$on && `background: ${color.active};`}
  ${(p) => p.$off && `color: ${color.muted};`}
`;
const Divider = styled.span`
  width: 1px;
  height: 24px;
  margin: 0 8px 0 7px;
  background: ${color.line};
`;
const RadioLabel = styled.label<{ $w: number }>`
  display: flex;
  align-items: center;
  gap: 4px;
  width: ${(p) => p.$w}px;
  color: #111;
`;
const Radio = styled.input`
  appearance: none;
  width: 14px;
  height: 14px;
  margin: 0;
  border: 1px solid #888;
  border-radius: 50%;
  &:checked { background: radial-gradient(circle, #1b76e8 0 3px, #fff 4px); }
`;
const SectionView = styled.div`
  position: relative;
  flex: 1;
  min-height: 0;
  background: #000;
`;
const SectionDrawing = styled.svg`
  display: block;
  width: 943px;
  height: 386px;
  font-family: ${MONO_FONT};
`;
const RebarField = styled.label`
  position: absolute;
  left: 12px;
  top: 9px;
  display: flex;
  align-items: center;
  gap: 6px;
  color: #e8e8e8;
`;
const RebarSelect = styled(SelectWrap)`
  color: ${color.text};
`;
const DialogStatus = styled.footer`
  flex: none;
  display: flex;
  align-items: center;
  gap: 1px;
  height: 30px;
  padding: 0 2px;
`;
const SnapButton = styled.button<{ $on?: boolean }>`
  ${bare}
  justify-content: center;
  width: 24px;
  height: 24px;
  border: 1px solid ${(p) => (p.$on ? '#3c8ae6' : '#a0a0a0')};
  border-radius: 3px;
  background: ${(p) => (p.$on ? '#dae8fb' : '#fff')};
`;

const gridX = [388, 432, 475, 519, 563, 606, 650, 693, 737, 781, 824];
const gridY = [242, 286, 329, 373, 416, 460, 503, 547];

function SectionEditor() {
  return (
    <Dialog role="dialog" aria-label="截面编辑">
      <DialogTitle>
        <DialogHeading>截面编辑</DialogHeading>
        <CloseButton aria-label="close">
          <svg width="12" height="12" viewBox="0 0 12 12"><path d="M1 1l10 10M11 1L1 11" stroke="#777" /></svg>
        </CloseButton>
      </DialogTitle>
      <DialogTools>
        <DialogButton $on>选择</DialogButton>
        <Divider />
        <RadioLabel $w={66}><Radio type="radio" name="bar" defaultChecked />纵筋</RadioLabel>
        <RadioLabel $w={42}><Radio type="radio" name="bar" />箍筋</RadioLabel>
        <Divider />
        <DialogButton>直线 <Caret w={5} /></DialogButton>
        <DialogButton>显示标注</DialogButton>
        <DialogButton $off>删除</DialogButton>
        <DialogButton $last>清空钢筋</DialogButton>
        <Divider />
        <DialogButton>布角筋</DialogButton>
        <DialogButton>布边筋</DialogButton>
        <DialogButton>对齐钢筋</DialogButton>
      </DialogTools>
      <SectionView>
        <SectionDrawing viewBox="167 194 943 386" fill="none">
          <g stroke="#333b48" strokeDasharray="14 4 4 4">
            {gridX.map((x) => <path key={x} d={`M${x + 0.5} 198V580`} />)}
            {gridY.map((y) => <path key={y} d={`M326 ${y + 0.5}H824`} />)}
            <path d="M332.500 234V580M378 198.500H824" />
          </g>
          {gridY.map((y) => <path key={y} d={`M327 ${y - 5}l8 8`} stroke="#333b48" />)}
          <g fill="#3a4252" fontSize="11">
            {gridY.map((y) => <text key={y} x="338" y={y + 26}>100</text>)}
          </g>
          <path d="M541.500 329.500h131v174h-131z" stroke="#f4f4f4" strokeWidth="3" />
          <path d="M559.500 347.500h95v139h-95z" stroke="#b8c8f0" strokeDasharray="4 3" />
          <g stroke="#c8161d" strokeWidth="4">
            <rect x="553" y="342" width="106" height="149" rx="4" />
            <path d="M585 342v149M627 342v149M553 421q1-5 6-5h94q5 0 6 5" />
            <path d="M553 350l35 34M561 342l35 35M587 352l33 32M590 341l37 36M553 423l35 35M660 422l-36 36" />
          </g>
          <g stroke="#f0d020"><circle cx="559" cy="347" r="3.500" /><circle cx="654" cy="347" r="3.500" /><circle cx="559" cy="486" r="3.500" /><circle cx="654" cy="486" r="3.500" /></g>
          <g stroke="#30e0e8"><circle cx="591" cy="347" r="2.500" /><circle cx="623" cy="347" r="2.500" /><circle cx="591" cy="486" r="2.500" /><circle cx="623" cy="486" r="2.500" /></g>
          <g stroke="#f0f"><circle cx="559" cy="393" r="3.500" /><circle cx="654" cy="393" r="3.500" /><circle cx="559" cy="439" r="3.500" /><circle cx="654" cy="439" r="3.500" /></g>
          <g stroke="#0f0">
            <path d="M689.500 329v174M676 329.500h26M676 416.500h26M676 503.500h26M680 320l18 18M680 407l18 18M680 494l18 18" />
            <path d="M541 521.500h131M541.500 508v26M606.500 508v26M672.500 508v26M533 530l18-18M598 530l18-18M663 530l18-18" />
          </g>
          <path d="M673 328l45-90" stroke="#999" strokeDasharray="3 3" />
          <g fontSize="15" fill="#00f000">
            <text x="597" y="325">BJ</text>
            <text transform="translate(533 432) rotate(-90)">2C16</text>
            <text x="796" y="244">4C16</text>
            <text x="796" y="265">C8@100/200</text>
            <text x="796" y="287">4C14</text>
          </g>
          <g fontSize="15" fill="#f0f0f0">
            <text x="693" y="380">200</text>
            <text x="693" y="467">200</text>
            <text x="561" y="545">150</text>
            <text x="626" y="545">150</text>
          </g>
          <g fontSize="17" fill="#f0f0f0" fontWeight="300">
            <text x="718" y="244">角筋</text>
            <text x="718" y="265">箍筋</text>
            <text x="718" y="287">其他纵筋</text>
          </g>
        </SectionDrawing>
        <RebarField>
          钢筋信息:
          <RebarSelect $w={135} $h={26}>
            <Select defaultValue="2C14"><option>2C14</option></Select>
            <Caret fill="#444" />
          </RebarSelect>
        </RebarField>
      </SectionView>
      <DialogStatus>
        <SnapButton aria-label="ortho"><Icon name="ortho" /></SnapButton>
        <SnapButton $on aria-label="midpoint"><Icon name="slash" /></SnapButton>
        <SnapButton $on aria-label="perpendicular"><Icon name="perp" /></SnapButton>
        <SnapButton aria-label="input"><Icon name="plusBar" /></SnapButton>
        <span>(X: 331 Y: 328)选择钢筋进行编辑，选择标注进行修改或移动;</span>
      </DialogStatus>
    </Dialog>
  );
}

/* -------------------------------------------------------------- status bar */

const StatusBar = styled.footer`
  flex: none;
  height: 11px;
  overflow: hidden;
  display: grid;
  grid-template-columns: 266px 84px 337px auto 1fr;
  background: #fcfcfc;
`;
const StatusText = styled.span`
  padding-top: 5px;
`;
const StatusTools = styled.div`
  display: flex;
  gap: 4px;
  padding: 3px 6px 0 0;
`;
const StatusButton = styled.button<{ $on?: boolean; $w: number }>`
  ${bare}
  justify-content: center;
  width: ${(p) => p.$w}px;
  height: 22px;
  border: 1px solid ${(p) => (p.$on ? '#3c8ae6' : '#a0a0a0')};
  border-radius: 3px;
  background: ${(p) => (p.$on ? '#dae8fb' : '#fff')};
`;
const bottomTools: [string, number][] = [['ortho', 25], ['lasso', 36], ['cross', 26], ['slash', 36], ['perp', 36], ['layers', 25], ['line', 25]];

export default function App() {
  return (
    <>
      <GlobalStyle />
      <Shell>
        <AppHeader />
        <RibbonBar />
        <FloorBar>
          <SelectWrap $w={99} $h={22}>
            <Select aria-label="楼层" defaultValue="首层"><option>首层</option></Select>
            <Caret fill="#555" />
          </SelectWrap>
          <SelectWrap $w={99} $h={22}>
            <Select aria-label="构件类型" defaultValue="柱"><option>柱</option></Select>
            <Caret fill="#555" />
          </SelectWrap>
        </FloorBar>
        <Body>
          <Navigation />
          <Properties />
          <ModelCanvas />
        </Body>
        <StatusBar>
          <span />
          <StatusText>层高:</StatusText>
          <StatusText>标高:</StatusText>
          <StatusTools>
            {bottomTools.map(([n, w]) => (
              <StatusButton key={n} $w={w} $on={n === 'lasso'} aria-label={n}><Icon name={n} size={14} /></StatusButton>
            ))}
          </StatusTools>
          <StatusText>按鼠标左键指定第一个角点，或拾取构件图元</StatusText>
        </StatusBar>
        <SectionEditor />
      </Shell>
    </>
  );
}
